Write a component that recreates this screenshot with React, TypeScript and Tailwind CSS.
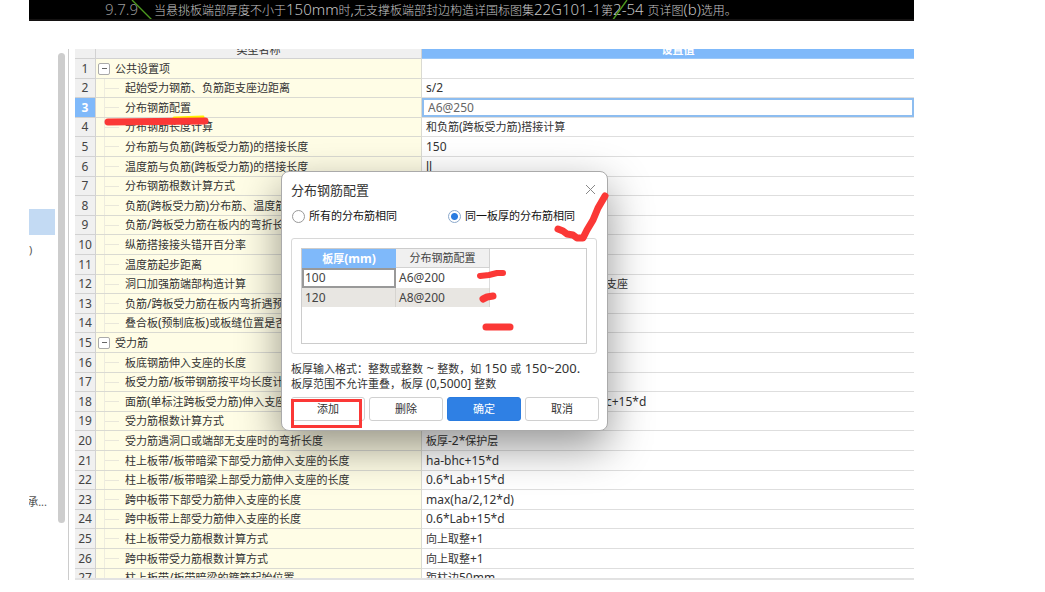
import React, { useState } from 'react';
import clsx from 'clsx';

interface Setting {
  name: string;
  value?: string;
  group?: boolean;
  tail?: boolean;
}

const settings: Setting[] = [
  { name: '公共设置项', group: true },
  { name: '起始受力钢筋、负筋距支座边距离', value: 's/2' },
  { name: '分布钢筋配置', value: 'A6@250' },
  { name: '分布钢筋长度计算', value: '和负筋(跨板受力筋)搭接计算' },
  { name: '分布筋与负筋(跨板受力筋)的搭接长度', value: '150' },
  { name: '温度筋与负筋(跨板受力筋)的搭接长度', value: 'll' },
  { name: '分布钢筋根数计算方式' },
  { name: '负筋(跨板受力筋)分布筋、温度筋' },
  { name: '负筋/跨板受力筋在板内的弯折长度' },
  { name: '纵筋搭接接头错开百分率' },
  { name: '温度筋起步距离' },
  { name: '洞口加强筋端部构造计算', value: '支座', tail: true },
  { name: '负筋/跨板受力筋在板内弯折遇预' },
  { name: '叠合板(预制底板)或板缝位置是否' },
  { name: '受力筋', group: true },
  { name: '板底钢筋伸入支座的长度' },
  { name: '板受力筋/板带钢筋按平均长度计算' },
  { name: '面筋(单标注跨板受力筋)伸入支座', value: 'c+15*d', tail: true },
  { name: '受力筋根数计算方式' },
  { name: '受力筋遇洞口或端部无支座时的弯折长度', value: '板厚-2*保护层' },
  { name: '柱上板带/板带暗梁下部受力筋伸入支座的长度', value: 'ha-bhc+15*d' },
  { name: '柱上板带/板带暗梁上部受力筋伸入支座的长度', value: '0.6*Lab+15*d' },
  { name: '跨中板带下部受力筋伸入支座的长度', value: 'max(ha/2,12*d)' },
  { name: '跨中板带上部受力筋伸入支座的长度', value: '0.6*Lab+15*d' },
  { name: '柱上板带受力筋根数计算方式', value: '向上取整+1' },
  { name: '跨中板带受力筋根数计算方式', value: '向上取整+1' },
  { name: '柱上板带/板带暗梁的箍筋起始位置', value: '距柱边50mm' },
];

const EDITING = 2;

// Latin runs are set one step larger than the Chinese around them
const Mixed: React.FC<{ text: string; latinClass?: string }> = ({ text, latinClass = 'text-[12px]' }) => (
  <>
    {text.split(/([\x20-\x7e]+)/).map((part, i) =>
      i % 2 === 1 ? <span key={i} className={latinClass}>{part}</span> : part
    )}
  </>
);

const DrawingNote: React.FC = () => (
  <div className="relative h-[21px] shrink-0 overflow-hidden border-b-2 border-[#141212] bg-black pl-[76px]">
    <p className="flex gap-4 whitespace-nowrap text-[12px] font-light leading-[18px] text-[#c4c4c4]">
      <span className="text-[15px] text-[#999]">9.7.9</span>
      <span>
        <Mixed
          text="当悬挑板端部厚度不小于150mm时,无支撑板端部封边构造详国标图集22G101-1第2-54 页详图(b)选用。"
          latinClass="text-[15px]"
        />
      </span>
    </p>
    <svg className="absolute left-0 top-0" width="700" height="21" fill="none" stroke="#4c9a1f" strokeWidth="1.4">
      <path d="M103 0L124 21M598 0L583 21" />
    </svg>
  </div>
);

const Sidebar: React.FC = () => (
  <aside className="flex w-[26px] shrink-0 flex-col overflow-hidden pt-40 text-[#555]">
    <div className="h-[26px] bg-[#c3daf3]" />
    <span className="mt-[7px] leading-4">)</span>
    <div className="mt-[236px] flex w-[18px] justify-end whitespace-nowrap leading-4">承...</div>
  </aside>
);

const SettingRow: React.FC<{ row: Setting; index: number }> = ({ row, index }) => {
  const editing = index === EDITING;
  return (
    <tr className="h-5 nth-[5n+2]:h-[19px] nth-[5n+4]:h-[19px]">
      <th
        scope="row"
        className={clsx(
          'border-b border-r border-[#d2d2d2] p-0 text-center text-[12px] leading-4',
          editing ? 'bg-[#7fb9fa] font-bold text-white' : 'bg-[#f0f0f0] font-normal text-[#444]'
        )}
      >
        {index + 1}
      </th>
      <td className="relative overflow-hidden whitespace-nowrap border-b border-r border-[#dadad2] bg-[#fffde6] p-0 leading-4">
        {row.group ? (
          <span className="flex items-center gap-[5px] pl-[2px]">
            <button
              aria-label={`折叠 ${row.name}`}
              className="flex size-3 items-center justify-center rounded-[2px] border border-[#aaa] bg-white"
            >
              <span className="h-px w-[5px] bg-[#666]" />
            </button>
            {row.name}
          </span>
        ) : (
          <span className="flex items-center gap-[6px] pl-2">
            <span className="absolute inset-y-0 left-2 w-px bg-[#eeecdf]" />
            <span className="h-px w-[15px] bg-[#e9e7da]" />
            <span>
              <Mixed text={row.name} />
            </span>
          </span>
        )}
      </td>
      <td className="overflow-hidden whitespace-nowrap border-b border-[#dedede] bg-white p-0 leading-4">
        {editing ? (
          <input
            aria-label={row.name}
            defaultValue={row.value}
            className="block h-[19px] w-full border-2 border-[#8dbdf0] px-1 text-[12px] text-[#666] outline-none"
          />
        ) : (
          row.value && (
            <div className={row.tail ? 'pl-[184px]' : 'pl-1'}>
              <Mixed text={row.value} />
            </div>
          )
        )}
      </td>
    </tr>
  );
};

const SettingsTable: React.FC = () => (
  <div className="min-w-0 flex-1 overflow-hidden border-b-2 border-[#e2e2e2]">
    <table className="w-full table-fixed border-separate border-spacing-0">
      <colgroup>
        <col className="w-[21px]" />
        <col className="w-[326px]" />
        <col />
      </colgroup>
      <thead>
        <tr>
          <th className="border-b border-r border-[#d2d2d2] bg-[#f0f0f0] p-0" />
          <th className="border-b border-r border-[#d2d2d2] bg-[#f0f0f0] p-0 font-normal">
            <div className="flex h-[9px] items-end justify-center overflow-hidden leading-4">类型名称</div>
          </th>
          <th className="border-b border-[#9cc8f8] bg-[#7fb9fa] p-0 font-bold text-white">
            <div className="flex h-[9px] items-end justify-center overflow-hidden pl-5 leading-4">设置值</div>
          </th>
        </tr>
      </thead>
      <tbody>
        {settings.map((row, i) => (
          <SettingRow key={i} row={row} index={i} />
        ))}
      </tbody>
    </table>
  </div>
);

const radioClass =
  'size-[13px] shrink-0 appearance-none rounded-full border border-[#999] bg-white checked:border-[#8ba9cc] checked:bg-[radial-gradient(circle,#2a7ce0_3px,white_4px)]';

const buttonClass = 'h-6 flex-1 rounded-[3px] border';

const ConfigDialog: React.FC = () => {
  const [mode, setMode] = useState('thickness');
  return (
    <div
      role="dialog"
      aria-label="分布钢筋配置"
      className="absolute left-[281px] top-[171px] w-[327px] rounded-lg border border-[#aaa] bg-white px-[9px] pb-[9px] text-[#333] shadow-[0_16px_44px_rgba(0,0,0,0.42)]"
    >
      <div className="flex h-[35px] items-center justify-between pr-px">
        <h2 className="text-[13px] leading-5">分布钢筋配置</h2>
        <button aria-label="关闭" className="p-px">
          <svg width="11" height="11" viewBox="0 0 11 11" stroke="#888" strokeWidth="1">
            <path d="M1 1L10 10M10 1L1 10" />
          </svg>
        </button>
      </div>

      <div className="flex h-[18px] items-center text-[#111]">
        <label className="flex w-[156px] items-center gap-1 pl-px">
          <input type="radio" name="mode" className={radioClass} checked={mode === 'all'} onChange={() => setMode('all')} />
          所有的分布筋相同
        </label>
        <label className="flex items-center gap-1 pl-px">
          <input type="radio" name="mode" className={radioClass} checked={mode === 'thickness'} onChange={() => setMode('thickness')} />
          同一板厚的分布筋相同
        </label>
      </div>

      <div className="mr-px mt-[13px] rounded-[3px] border border-[#d8d8d8] p-[9px]">
        <div className="h-24 border border-[#ccc]">
          <table className="w-[188px] table-fixed border-separate border-spacing-0 text-[12px] text-[#444]">
            <thead>
              <tr className="h-[19px] text-[11px]">
                <th className="bg-[#7fb9fa] p-0 font-bold leading-4 text-white">
                  <Mixed text="板厚(mm)" />
                </th>
                <th className="border-b border-r border-[#d2d2d2] bg-[#f0f0f0] p-0 font-normal leading-4">分布钢筋配置</th>
              </tr>
            </thead>
            <tbody>
              <tr className="h-5">
                <td className="border-2 border-[#999] px-px py-0 leading-4">100</td>
                <td className="border-r border-[#ddd] px-[3px] py-0 leading-4">A6@200</td>
              </tr>
              <tr className="h-[19px] bg-[#e8e6e2]">
                <td className="border-r border-[#d6d4d0] px-[3px] py-0 leading-4">120</td>
                <td className="border-r border-[#d6d4d0] px-[3px] py-0 leading-4">A8@200</td>
              </tr>
            </tbody>
          </table>
        </div>
      </div>

      <div className="mt-[6px] whitespace-nowrap leading-4">
        <p className="h-4">
          <Mixed text="板厚输入格式：整数或整数 ~ 整数，如 150 或 150~200." latinClass="text-[13px]" />
        </p>
        <p className="h-4">
          <Mixed text="板厚范围不允许重叠，板厚 (0,5000] 整数" />
        </p>
      </div>

      <div className="-mr-px mt-[5px] flex gap-1">
        <button className={clsx(buttonClass, 'border-[#d0d0d0] bg-white')}>添加</button>
        <button className={clsx(buttonClass, 'border-[#d0d0d0] bg-white')}>删除</button>
        <button className={clsx(buttonClass, 'border-[#2a7ce0] bg-[#2f80e4] text-white')}>确定</button>
        <button className={clsx(buttonClass, 'border-[#d0d0d0] bg-white')}>取消</button>
      </div>
    </div>
  );
};

// Marker strokes drawn over the window
const Markup: React.FC = () => (
  <svg
    className="pointer-events-none absolute left-0 top-0"
    width="640"
    height="440"
    fill="none"
    stroke="#fb3836"
    strokeLinecap="round"
    strokeLinejoin="round"
  >
    <path d="M174 118L203 117" stroke="#fff200" strokeWidth="3" />
    <path d="M108 122L205 121" strokeWidth="7" />
    <path d="M558 229L563 231L567 234L573 235L577 238L583 238L587 230L593 220L598 208L605 196" strokeWidth="7" />
    <path d="M480 276L489 275L497 273L503 273" strokeWidth="6" />
    <path d="M483 299L487 297L493 296" strokeWidth="7" />
    <path d="M486 327H510" strokeWidth="7" />
    <path d="M292.500 400.500H360.500V426.500H292.500Z" strokeWidth="3" strokeLinejoin="miter" />
  </svg>
);

export default function App() {
  return (
    <div className="relative flex h-screen flex-col overflow-hidden bg-white pb-3 pl-[29px] pr-[131px] font-['Noto_Sans','Noto_Sans_CJK_SC',sans-serif] text-[11px] text-[#333]">
      <DrawingNote />
      <main className="mt-7 flex min-h-0 flex-1">
        <Sidebar />
        <div className="mt-1 mb-[57px] ml-[3px] w-[7px] shrink-0 rounded-full bg-[#cdcdcd]" />
        <div className="ml-[3px] mr-[6px] w-px shrink-0 bg-[#ccc]" />
        <SettingsTable />
      </main>
      <ConfigDialog />
      <Markup />
    </div>
  );
}
